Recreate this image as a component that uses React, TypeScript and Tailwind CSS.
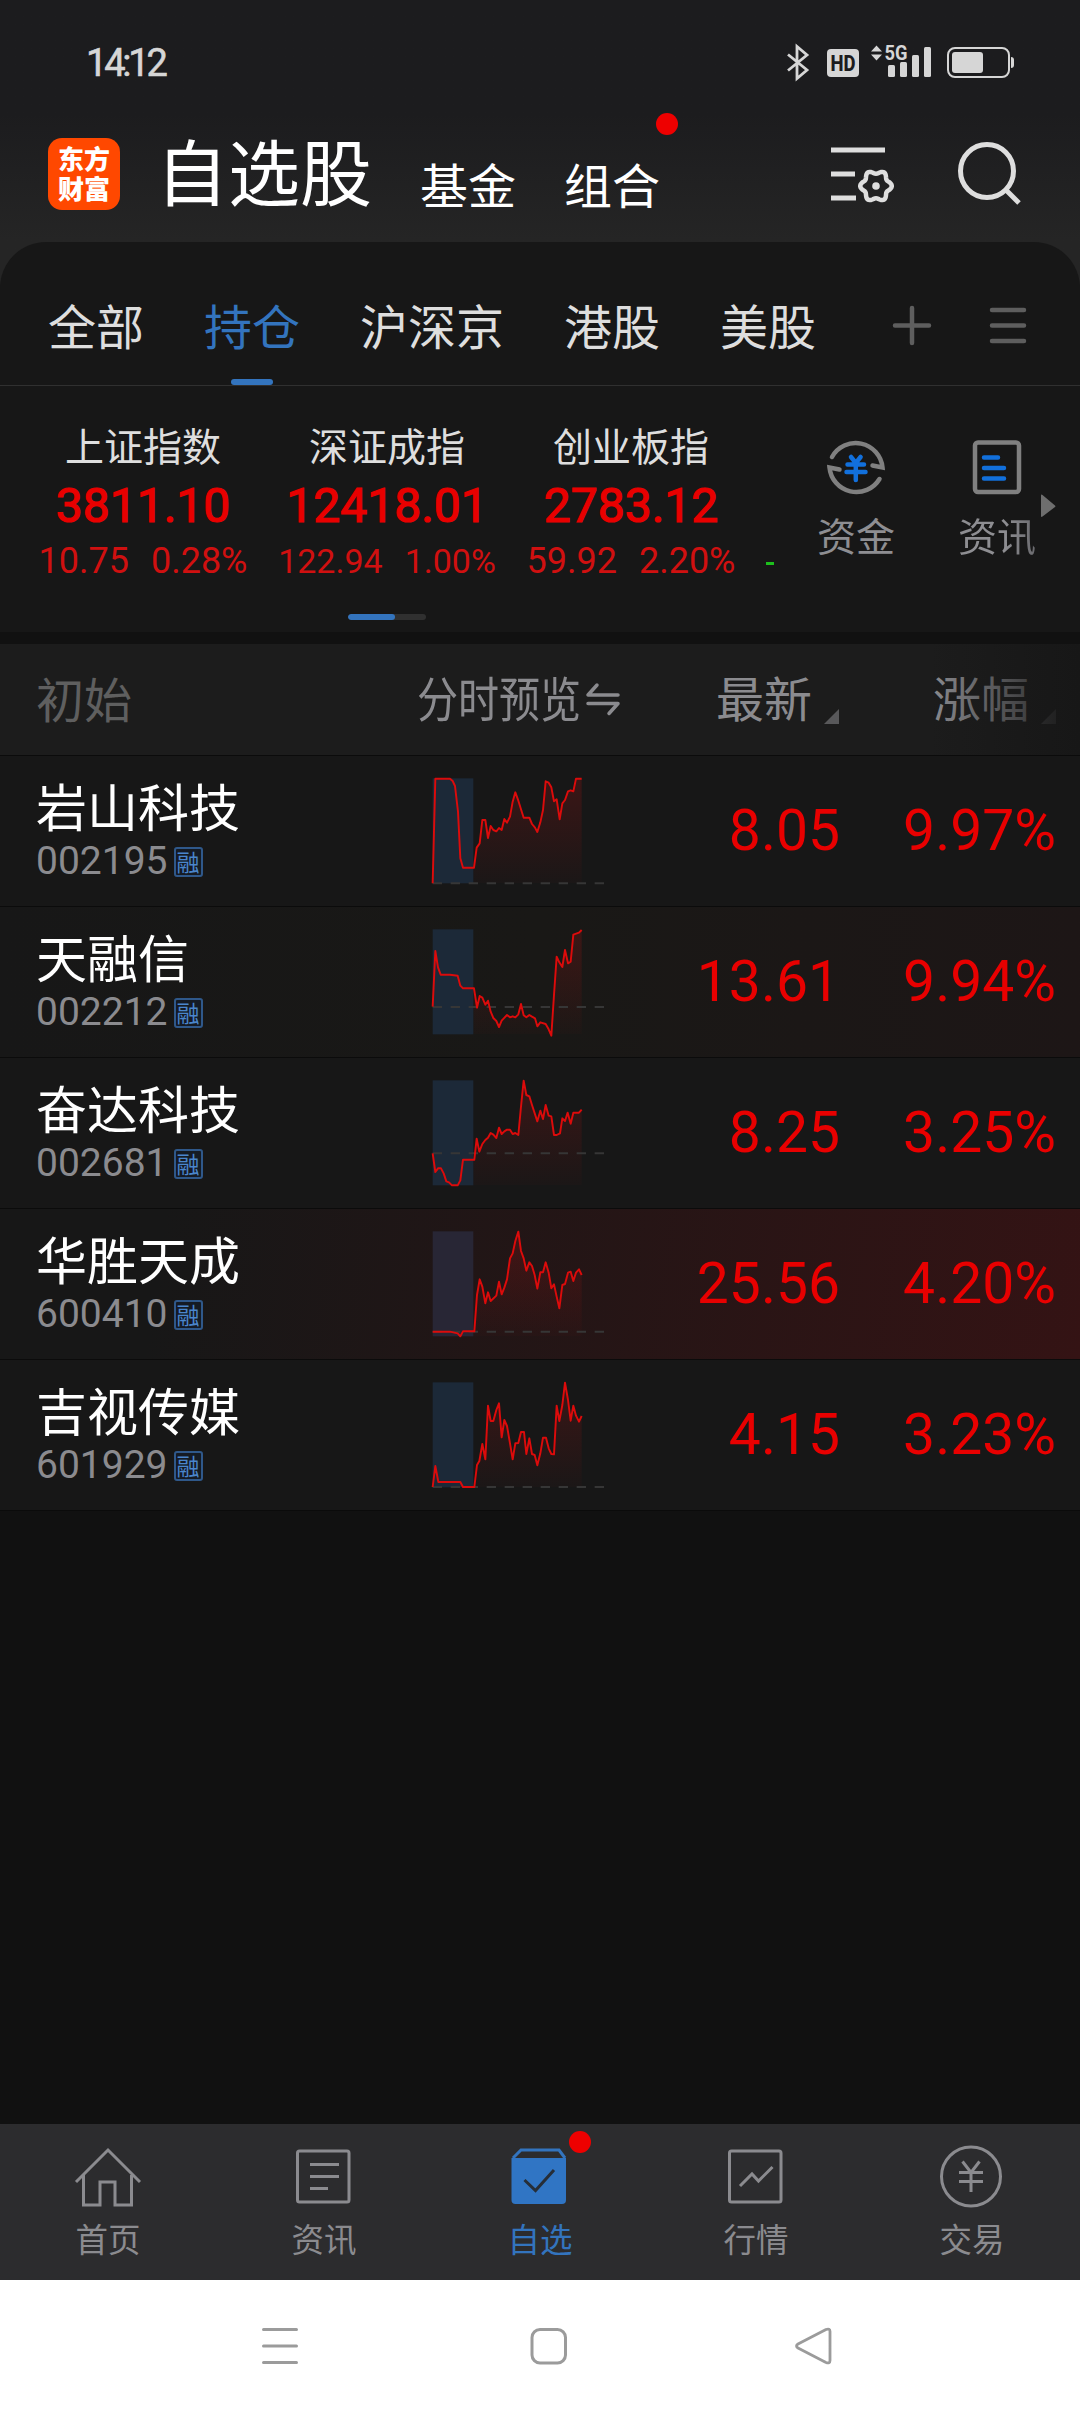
import React from "react";
import clsx from "clsx";

const CJK = "font-['Noto_Sans_CJK_SC','Noto_Sans',sans-serif]";
const NUM = "font-[Roboto,'Noto_Sans_CJK_SC',sans-serif]";

const tabs = ["全部", "持仓", "沪深京", "港股", "美股"];

const indices = [
  { name: "上证指数", value: "3811.10", diff: "10.75", pct: "0.28%", size: "text-[36px]" },
  { name: "深证成指", value: "12418.01", diff: "122.94", pct: "1.00%", size: "text-[34px]" },
  { name: "创业板指", value: "2783.12", diff: "59.92", pct: "2.20%", size: "text-[36px]" },
];

const stocks = [
  {
    name: "岩山科技",
    code: "002195",
    price: "8.05",
    pct: "9.97%",
    bg: "bg-[#171717]",
    band: "#1c2938",
    base: 382,
    line: "98,382 106,68 150,68 158,75 165,90 174,167 181,307 189,335 222,335 230,275 239,262 247,192 256,192 264,246 272,210 280,222 289,226 297,216 305,222 313,189 321,200 330,182 338,137 346,109 355,134 371,185 388,185 396,204 405,215 412,228 421,199 429,162 437,76 446,80 454,94 462,136 470,130 479,190 487,142 495,132 504,106 512,103 520,106 528,68 545,68",
  },
  {
    name: "天融信",
    code: "002212",
    price: "13.61",
    pct: "9.94%",
    bg: "bg-linear-to-r from-[#171717] via-[#191816] to-[#1d1616]",
    band: "#1c2938",
    base: 300,
    line: "98,299 106,132 114,181 122,203 150,203 173,206 181,236 189,244 222,244 231,302 239,267 247,272 256,293 264,281 272,314 280,333 289,342 297,360 305,341 321,324 330,331 338,328 346,331 355,322 363,291 371,325 379,331 388,324 396,329 405,334 412,358 421,346 437,351 446,367 454,386 462,264 470,149 478,166 487,180 495,129 504,169 512,164 520,83 537,77 545,69",
  },
  {
    name: "奋达科技",
    code: "002681",
    price: "8.25",
    pct: "3.25%",
    bg: "bg-[#171717]",
    band: "#1c2938",
    base: 286,
    line: "98,286 106,342 114,331 123,331 131,346 139,370 147,373 156,382 173,382 181,367 189,305 223,305 230,242 238,281 247,258 256,246 264,239 272,225 280,230 289,240 297,209 305,228 313,220 321,215 330,215 338,228 346,225 355,231 363,146 371,68 379,111 388,115 396,141 412,190 421,158 429,183 437,141 446,173 454,175 462,231 470,231 480,226 487,181 495,189 503,164 512,197 520,164 537,164 545,155",
  },
  {
    name: "华胜天成",
    code: "600410",
    price: "25.56",
    pct: "4.20%",
    bg: "bg-linear-[98deg] from-[#171717] from-15% to-[#341314]",
    band: "#282635",
    base: 368,
    line: "98,368 150,368 173,373 181,382 189,367 223,367 231,258 239,211 247,233 256,283 264,250 272,276 289,260 297,218 305,256 313,236 321,211 330,148 338,133 346,96 355,68 363,126 371,148 379,185 388,160 396,171 404,198 412,239 421,190 429,190 437,160 446,191 454,238 462,226 470,263 478,298 487,228 495,225 504,191 512,188 520,216 528,191 537,181 545,198",
  },
  {
    name: "吉视传媒",
    code: "601929",
    price: "4.15",
    pct: "3.23%",
    bg: "bg-[#171717]",
    band: "#1c2938",
    base: 381,
    line: "98,381 106,318 115,366 181,366 189,381 223,381 231,315 238,303 247,252 256,298 264,137 272,183 280,183 289,150 297,130 305,232 313,180 321,198 330,250 338,298 346,250 355,249 363,216 372,216 379,282 388,235 396,282 404,285 412,316 421,280 429,233 438,233 446,265 454,282 462,283 470,137 478,183 487,135 495,68 504,120 512,182 520,137 528,167 537,185 545,168",
  },
];

const StatusBar = () => (
  <div className="flex h-[106px] items-start justify-between pr-[66px] pl-[86px]">
    <span className={clsx(NUM, "mt-[41px] text-[38px] leading-[45px] tracking-[-3.2px] text-[#d6d6d6] [-webkit-text-stroke:0.6px_#d6d6d6]")}>
      14:12
    </span>
    <svg className="mt-[40px] h-[44px] w-[232px]" viewBox="782 40 232 44" fill="#d6d6d6">
      <path d="M788 54.5 807 70 797 78.5V46.5L807 55 788 70.5" fill="none" stroke="#d6d6d6" strokeWidth="2.8" />
      <rect x="827" y="49" width="32" height="28" rx="4" />
      <text x="843" y="71" textAnchor="middle" fontFamily="Roboto" fontWeight="800" fontSize="22" textLength="25" lengthAdjust="spacingAndGlyphs" fill="#1c1c1e">
        HD
      </text>
      <path d="M876.500 45.500 882 51.500H871zM876.500 60.500 882 54.500H871z" />
      <text x="884.500" y="60" fontFamily="Roboto" fontWeight="700" fontSize="21" textLength="23" lengthAdjust="spacingAndGlyphs">
        5G
      </text>
      <rect x="888" y="65" width="7" height="12" rx="1.500" />
      <rect x="900" y="62" width="7" height="15" rx="1.500" />
      <rect x="912" y="55" width="7" height="22" rx="1.500" />
      <rect x="924" y="47" width="7" height="30" rx="1.500" />
      <rect x="948" y="48" width="61" height="29" rx="7" fill="none" stroke="#d6d6d6" strokeWidth="2" />
      <rect x="952" y="52" width="31" height="21" rx="3" />
      <path d="M1011 57q3 0 3 3v5q0 3-3 3z" />
    </svg>
  </div>
);

// six-lobed outline of the settings gear
const gearPath = () => {
  const pts: string[] = [];
  for (let i = 0; i <= 72; i++) {
    const a = (i / 72) * Math.PI * 2;
    const r = 14 + 1.8 * Math.cos(6 * a);
    pts.push(`${(876 + r * Math.cos(a)).toFixed(2)} ${(186 + r * Math.sin(a)).toFixed(2)}`);
  }
  return `M${pts.join("L")}Z`;
};

const Header = () => (
  <div className="flex h-[136px] items-start pl-[48px]">
    <div className={clsx(CJK, "mt-[32px] flex size-[72px] items-center justify-center rounded-[14px] bg-[#ff4800] pb-[3px] text-center text-[26px] leading-[30px] font-black whitespace-pre-line text-white")}>
      {"东方\n财富"}
    </div>
    <span className={clsx(CJK, "mt-[18px] ml-[36px] text-[72px] leading-[90px] text-white")}>自选股</span>
    <span className={clsx(CJK, "mt-[47px] ml-[48px] text-[48px] leading-[60px] text-white")}>基金</span>
    <div className="relative ml-[48px]">
      <span className={clsx(CJK, "mt-[47px] block text-[48px] leading-[60px] text-white")}>组合</span>
      <i className="absolute top-[7px] -right-[18px] size-[22px] rounded-full bg-[#ee0000]" />
    </div>
    <svg className="mt-[32px] ml-[164px] h-[80px] w-[204px]" viewBox="824 138 204 80" fill="none" stroke="#dedede" strokeWidth="5">
      <path d="M831 150h54M831 174h24M831 198h25" />
      <path d={gearPath()} strokeWidth="4.500" />
      <circle cx="876" cy="186" r="3.800" fill="#dedede" stroke="none" />
      <circle cx="987" cy="171" r="26.500" />
      <path d="M1006 190l13 13" />
    </svg>
  </div>
);

const TabBar = () => (
  <div className="flex h-[144px] items-start gap-[60px] border-b border-[#303030] pl-[48px]">
    {tabs.map((t, i) => (
      <div
        key={t}
        className={clsx(
          CJK,
          "flex h-[143px] flex-col items-center justify-between pt-[52px] text-[48px] leading-[60px] whitespace-nowrap",
          i === 1 ? "text-[#3374be]" : "text-[#dedede]"
        )}
      >
        {t}
        {i === 1 && <i className="h-[6px] w-[42px] rounded-full bg-[#3374be]" />}
      </div>
    ))}
    <svg className="mt-[58px] ml-[12px] h-[50px] w-[144px]" viewBox="888 300 144 50" stroke="#5e5e5e" strokeWidth="4.500" strokeLinecap="round">
      <path d="M895 325.500h34M912 308v35M992 310h32M992 325.500h32M992 341h32" />
    </svg>
  </div>
);

const IndexStrip = () => (
  <div className="flex h-[246px] flex-col">
    <div className="flex h-[228px] pl-[21px]">
      {indices.map((x) => (
        <div key={x.name} className="flex w-[244px] flex-col items-center whitespace-nowrap">
          <span className={clsx(CJK, "mt-[33px] text-[39px] leading-[50px] text-[#dedede]")}>{x.name}</span>
          <span className={clsx(NUM, "mt-[8px] text-[48px] leading-[58px] text-[#e80000] [-webkit-text-stroke:1.2px_#e80000]")}>
            {x.value}
          </span>
          <div className={clsx(NUM, "mt-[4px] flex gap-[22px] leading-[44px] text-[#d01010]", x.size)}>
            <span>{x.diff}</span>
            <span>{x.pct}</span>
          </div>
        </div>
      ))}
      <div className="flex w-[32px] items-start pt-[176px] pl-[13px]">
        <i className="h-[3px] w-[8px] bg-[#1dc01d]" />
      </div>
      <div className="flex items-start gap-[63px] pl-[32px]">
        <div className={clsx(CJK, "flex w-[78px] flex-col items-center text-[39px] leading-[50px] text-[#8e8e92]")}>
          <svg className="mt-[48px] h-[66px] w-[66px]" viewBox="823 434 66 66" fill="none" stroke="#808080" strokeWidth="4.500">
            <path d="M832 457a27 27 0 0 1 50.500 10.500l-10-2M879.500 479a27 27 0 0 1-50-11.500l10 2" strokeLinecap="round" />
            <path d="M851 457l4.800 6 4.800-6M847.500 464.500h16.500M846.500 472h19M855.800 464v16" stroke="#1270dc" strokeLinecap="round" />
          </svg>
          <span className="mt-[9px]">资金</span>
        </div>
        <div className={clsx(CJK, "flex w-[78px] flex-col items-center text-[39px] leading-[50px] text-[#8e8e92]")}>
          <svg className="mt-[48px] h-[66px] w-[66px]" viewBox="964 434 66 66" fill="none" stroke="#808080" strokeWidth="4.500">
            <rect x="975" y="442.500" width="44" height="49.500" rx="3" />
            <path d="M984 457.500h14M984 468h20M984 478.500h20" stroke="#1270dc" strokeLinecap="round" />
          </svg>
          <span className="mt-[9px] bg-linear-to-r from-[#8e8e92] from-60% to-[#6a6a6e] bg-clip-text text-transparent">
            资讯
          </span>
        </div>
      </div>
      <svg className="mt-[108px] ml-[5px] h-[24px] w-[15px]" viewBox="0 0 15 24" fill="#6e6e6e">
        <path d="M0 1.500q0-1.500 1.500-.5L14 11.500q1 .8 0 1.500L1.500 22.500q-1.500 1-1.500-.5z" />
      </svg>
    </div>
    <div className="ml-[348px] h-[6px] w-[78px] overflow-hidden rounded-full bg-[#303030]">
      <div className="h-full w-[47px] rounded-full bg-[#3374be]" />
    </div>
  </div>
);

const Corner = ({ className }: { className: string }) => (
  <svg className={clsx("h-[15px] w-[15px]", className)} viewBox="0 0 15 15">
    <path d="M15 0v15H0z" fill="currentColor" />
  </svg>
);

const ListHeader = () => (
  <div className={clsx(CJK, "relative flex h-[112px] items-start border-b border-[#0b0b0b] bg-[#1c1c1c] pt-[22px] text-[48px] leading-[60px]")}>
    <span className="mt-[1px] w-[417px] pl-[36px] text-[#5f5f5f]">初始</span>
    <div className="flex w-[299px] items-start text-[#8b8b8f]">
      <span className="w-[165px] origin-left scale-x-[0.855] whitespace-nowrap">分时预览</span>
      <svg className="mt-[15px] ml-[2px] h-[36px] w-[38px]" viewBox="584 682 38 36" fill="none" stroke="#8b8b8f" strokeWidth="3.500" strokeLinecap="round" strokeLinejoin="round">
        <path d="M597 686l-9 10h30M588 704.500h30l-9 10" />
      </svg>
    </div>
    <div className="flex w-[217px] text-[#8b8b8f]">
      <span>最新</span>
      <Corner className="mt-[43px] ml-[12px] text-[#58585a]" />
    </div>
    <div className="flex text-[#8b8b8f]">
      <span>涨幅</span>
      <Corner className="mt-[43px] ml-[12px] text-[#58585a]" />
    </div>
    <div className="absolute inset-y-0 right-0 w-[150px] bg-linear-to-r from-[#171717]/0 to-[#171717]" />
  </div>
);

const Sparkline = ({ id, line, base, band }: { id: string; line: string; base: number; band: string }) => (
  <svg className="h-[150px] w-[180px]" viewBox="90 0 540 450" fill="none">
    <defs>
      <linearGradient id={id} gradientUnits="userSpaceOnUse" x1="0" y1="68" x2="0" y2="382">
        <stop offset="0" stopColor="#e01010" stopOpacity="0.180" />
        <stop offset="1" stopColor="#e01010" stopOpacity="0.020" />
      </linearGradient>
      <clipPath id={`${id}-clip`}>
        <rect x="221" y="0" width="330" height="382" />
      </clipPath>
    </defs>
    <rect x="98" y="67" width="122" height="315" fill={band} />
    <polygon points={`98,382 ${line} 545,382`} fill={`url(#${id})`} clipPath={`url(#${id}-clip)`} />
    <path d={`M98 ${base}H612`} stroke="#363636" strokeWidth="6" strokeDasharray="28 26" />
    <polyline points={line} stroke="#dc0b0b" strokeWidth="5.800" strokeLinejoin="round" />
  </svg>
);

const StockRow = ({ stock }: { stock: (typeof stocks)[number] }) => (
  <div className={clsx("flex h-[151px] items-start border-b border-[#0b0b0b]", stock.bg)}>
    <div className="flex w-[430px] flex-col pl-[36px]">
      <span className={clsx(CJK, "mt-[19px] text-[51px] leading-[60px] text-white")}>{stock.name}</span>
      <div className="mt-[3px] flex items-start">
        <span className={clsx(NUM, "text-[39px] leading-[46px] text-[#8b8b8f]")}>{stock.code}</span>
        <span className={clsx(CJK, "mt-[9px] ml-[6px] flex h-[30px] w-[29px] items-center justify-center rounded-[3px] border-2 border-[#2f588a] bg-[#151b24] pb-[3px] text-[23px] leading-[26px] text-[#4a86cc]")}>
          融
        </span>
      </div>
    </div>
    <Sparkline id={`s${stock.code}`} line={stock.line} base={stock.base} band={stock.band} />
    <span className={clsx(NUM, "mt-[41px] w-[230px] text-right text-[57px] leading-[68px] text-[#e80000]")}>{stock.price}</span>
    <span className={clsx(NUM, "mt-[41px] w-[216px] text-right text-[57px] leading-[68px] text-[#e80000]")}>{stock.pct}</span>
  </div>
);

const navItems = [
  {
    label: "首页",
    icon: <path d="M76 2182l32-32 32 32M83.500 2175v30h16.500v-23h15v23h16.500v-30" />,
  },
  {
    label: "资讯",
    icon: (
      <>
        <rect x="297.500" y="2151" width="51.500" height="51" rx="2" />
        <path d="M310 2164.500h29M310 2176.500h29M310 2188.500h18" />
      </>
    ),
  },
  {
    label: "自选",
    active: true,
    icon: (
      <>
        <path d="M513 2158l8-8h38l6 8" />
        <path d="M511.500 2158h54.500v42q0 4-4 4h-46.500q-4 0-4-4z" fill="#3075c4" stroke="none" />
        <path d="M524.500 2180l11 10.500L554 2170" stroke="#262e38" />
      </>
    ),
  },
  {
    label: "行情",
    icon: (
      <>
        <rect x="729.500" y="2151" width="51.500" height="51" rx="2" />
        <path d="M740 2186l12-12 6.500 7 14-14" />
      </>
    ),
  },
  {
    label: "交易",
    icon: (
      <>
        <circle cx="971" cy="2176.500" r="29.500" />
        <path d="M962.500 2161.500l8.500 11 8.500-11M959 2172.500h24M959 2181.500h24M971 2172v20" />
      </>
    ),
  },
];

const navBoxes = ["72 2140 72 72", "288 2140 72 72", "504 2140 72 72", "720 2140 72 72", "936 2140 72 72"];

const BottomNav = () => (
  <div className="grid h-[156px] grid-cols-5 bg-[#2c2c2e]">
    {navItems.map((n, i) => (
      <div
        key={n.label}
        className={clsx(CJK, "relative flex flex-col items-center text-[32.500px] leading-[40px]", n.active ? "text-[#3374be]" : "text-[#8b8b8f]")}
      >
        <svg className="mt-[16px] size-[72px]" viewBox={navBoxes[i]} fill="none" stroke="currentColor" strokeWidth="3">
          {n.icon}
        </svg>
        <span className="mt-[6px]">{n.label}</span>
        {n.active && <i className="absolute top-[7px] left-[137px] size-[22px] rounded-full bg-[#ee0000]" />}
      </div>
    ))}
  </div>
);

const SystemNav = () => (
  <div className="flex h-[132px] items-center justify-between bg-white px-[260px]">
    <svg className="size-[40px]" viewBox="0 0 40 40" stroke="#9b9b9b" strokeWidth="3" strokeLinecap="round">
      <path d="M3.500 3.500h33M3.500 20h33M3.500 36.500h33" />
    </svg>
    <svg className="ml-[4px] size-[40px]" viewBox="0 0 40 40" fill="none" stroke="#9b9b9b" strokeWidth="3">
      <rect x="3" y="3.500" width="33.500" height="33.500" rx="8" />
    </svg>
    <svg className="-mr-[14px] size-[40px]" viewBox="0 0 40 40" fill="none" stroke="#9b9b9b" strokeWidth="2.800" strokeLinejoin="round">
      <path d="M32 3.500q4-1.500 4 2v29q0 3.500-4 2L4 22q-3-2 0-4z" />
    </svg>
  </div>
);

const App = () => {
  return (
    <div className="flex h-[2412px] w-[1080px] flex-col overflow-hidden bg-[#111111]">
      <div className="bg-linear-to-b from-[#1c1c1e] from-18% to-[#252525] to-38%">
        <StatusBar />
        <Header />
        <div className="rounded-t-[46px] bg-[#171717]">
          <TabBar />
          <IndexStrip />
        </div>
      </div>
      <div className="mt-[12px]">
        <ListHeader />
        {stocks.map((s) => (
          <StockRow key={s.code} stock={s} />
        ))}
      </div>
      <div className="mt-auto">
        <BottomNav />
        <SystemNav />
      </div>
    </div>
  );
};

export default App;
